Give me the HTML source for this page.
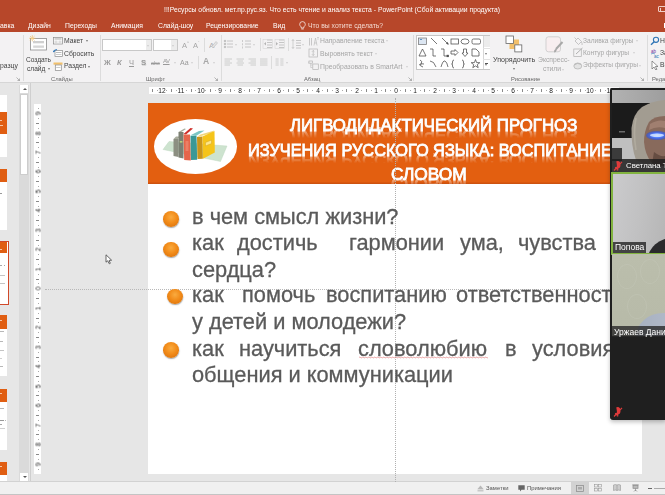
<!DOCTYPE html>
<html><head><meta charset="utf-8">
<style>
*{margin:0;padding:0;box-sizing:border-box}
html,body{width:665px;height:495px;overflow:hidden;background:#e5e5e5;font-family:"Liberation Sans",sans-serif}
.a{position:absolute}
.t{position:absolute;white-space:nowrap;line-height:1;will-change:transform}
#title{left:0;top:0;width:665px;height:32px;background:#b7472a}
.wt{color:#fff;font-size:6.8px}
.wt2{color:#f3d9d0;font-size:6.8px}
#ribbon{left:0;top:32px;width:665px;height:51px;background:#f3f2f3;border-bottom:1px solid #d6d6d6}
.rt{color:#444;font-size:6.8px}
.gl{color:#666;font-size:6.8px}
.dis{color:#a6a6a6;font-size:6.8px}
.sep{position:absolute;width:1px;background:#dcdcdc}
#work{left:0;top:83px;width:665px;height:399px;background:#e6e6e6}
#status{left:0;top:481px;width:665px;height:14px;background:#f0f0f0;border-top:1px solid #d2d2d2;border-bottom:1.2px solid #c4c4c4}
.thumb{position:absolute;left:0;width:7.3px;background:#fff}
.thumb .h{position:absolute;left:0;width:7.3px;background:#e05e12}
#slide{left:148px;top:103px;width:494px;height:371px;background:#fff}
.body{color:#5a5a5a;font-size:21.8px;-webkit-text-stroke:0.3px #5a5a5a}
.title{transform-origin:0 0;color:#fff;font-size:16.3px;font-weight:normal;-webkit-text-stroke:0.8px #fff;text-shadow:0 0 1px rgba(120,60,20,.5);-webkit-box-reflect:below -6px linear-gradient(transparent 30%,rgba(255,255,255,.7))}
.bul{position:absolute;width:16px;height:15.7px;border-radius:50%;background:radial-gradient(circle at 50% 38%,#f9ab40 0,#f28c1a 45%,#e27a10 75%,#a85208 100%);box-shadow:0.3px 1px 1.2px rgba(0,0,0,.35)}
.rn{position:absolute;width:10px;text-align:center;font-size:6.6px;line-height:7px;color:#222;will-change:transform}
.rv{transform:rotate(-90deg)}
.arr{position:absolute;width:0;height:0;border-left:1.8px solid transparent;border-right:1.8px solid transparent;border-top:2px solid #777}
.arr.g{border-top-color:#bdbdbd;transform:scale(.85)}
.gl{font-size:5.8px}
</style></head><body>
<div id="title" class="a"></div>
<div class="t wt" style="left:164px;top:7px">!!!Ресурсы обновл. мет.пр.рус.яз. Что есть чтение и анализ текста - PowerPoint (Сбой активации продукта)</div>
<div class="t wt" style="left:0;top:23px">авка</div>
<div class="t wt" style="left:28px;top:23px">Дизайн</div>
<div class="t wt" style="left:65px;top:23px">Переходы</div>
<div class="t wt" style="left:111px;top:23px">Анимация</div>
<div class="t wt" style="left:157.6px;top:23px">Слайд-шоу</div>
<div class="t wt" style="left:205.6px;top:23px">Рецензирование</div>
<div class="t wt" style="left:273px;top:23px">Вид</div>
<div class="t wt2" style="left:307.7px;top:23px">Что вы хотите сделать?</div>

<div id="ribbon" class="a"></div>
<div id="work" class="a"></div>
<!-- ribbon content -->
<div class="t rt" style="left:0;top:63.3px">разцу</div>
<svg class="a" style="left:16px;top:77px" width="4" height="4"><path d="M0.5,0.5 L3.5,3.5 M3.5,1.5 V3.5 H1.5" stroke="#888" stroke-width="0.6" fill="none"/></svg>
<div class="sep" style="left:22.5px;top:35px;height:46px"></div>
<!-- Создать слайд -->
<svg class="a" style="left:28px;top:34px" width="20" height="18" viewBox="0 0 20 18"><rect x="2.5" y="4.5" width="16" height="11.5" fill="#fff" stroke="#8c8c8c" stroke-width="0.8"/><rect x="5" y="7" width="11" height="2.3" fill="#cfcfcf"/><rect x="6" y="11.5" width="10" height="2.3" fill="#d6d6d6"/><rect x="5" y="11.5" width="0.5" height="2.3" fill="#bbb"/><circle cx="4.3" cy="4.3" r="1.3" fill="#f4d08a"/><path d="M4.3,1.2V3M4.3,5.6V7.4M1.2,4.3H3M5.6,4.3H7.4M2.1,2.1L3.2,3.2M5.4,5.4L6.5,6.5M2.1,6.5L3.2,5.4M5.4,3.2L6.5,2.1" stroke="#efbf6a" stroke-width="0.7"/></svg>
<div class="t rt" style="left:25.5px;top:56.8px;font-size:6.6px">Создать</div>
<div class="t rt" style="left:27px;top:66.0px;font-size:6.6px">слайд</div>
<div class="arr" style="left:47.5px;top:68px"></div>
<svg class="a" style="left:53px;top:37px" width="10" height="7.5" viewBox="0 0 10 7.5"><rect x="0.5" y="0.5" width="9" height="6.5" fill="#fff" stroke="#8a8a8a" stroke-width="0.7"/><rect x="1.5" y="1.3" width="7" height="1.3" fill="#bbb"/><rect x="1.5" y="3.5" width="3" height="2.5" fill="#ddd"/><rect x="5.5" y="3.5" width="3" height="2.5" fill="#ddd"/></svg>
<div class="t rt" style="left:63.5px;top:38.1px">Макет</div>
<div class="arr" style="left:85.5px;top:40px"></div>
<svg class="a" style="left:53px;top:49px" width="10" height="8" viewBox="0 0 10 8"><rect x="2" y="1.5" width="7.5" height="6" fill="#fff" stroke="#8a8a8a" stroke-width="0.7"/><rect x="3" y="3" width="5.5" height="1" fill="#bbb"/><rect x="3" y="5" width="5.5" height="1" fill="#ccc"/><path d="M0.5,3 Q1,0.3 4,0.8" stroke="#2e75b6" stroke-width="1.1" fill="none"/><path d="M0,1.8 L0.8,3.6 L2,2.2Z" fill="#2e75b6"/></svg>
<div class="t rt" style="left:63.5px;top:50.6px">Сбросить</div>
<svg class="a" style="left:53px;top:61.5px" width="10" height="9" viewBox="0 0 10 9"><rect x="0.5" y="0.5" width="9" height="2.2" fill="#f2c06b"/><rect x="2.3" y="3" width="6" height="5.5" fill="#fff" stroke="#8a8a8a" stroke-width="0.7"/><rect x="3.2" y="5" width="4.2" height="1" fill="#ccc"/></svg>
<div class="t rt" style="left:63.5px;top:63.4px">Раздел</div>
<div class="arr" style="left:87.7px;top:65.5px"></div>
<div class="t gl" style="left:51px;top:77.0px">Слайды</div>
<div class="sep" style="left:99.5px;top:35px;height:46px"></div>
<!-- Шрифт -->
<div class="a" style="left:101.9px;top:39px;width:50px;height:12.3px;background:#fff;border:1px solid #c8c8c8"></div>
<div class="a" style="left:145.5px;top:40px;width:5.5px;height:10.3px;background:#ececec"></div>
<div class="arr g" style="left:146.6px;top:44.5px"></div>
<div class="a" style="left:152.8px;top:39px;width:25px;height:12.3px;background:#fff;border:1px solid #c8c8c8"></div>
<div class="a" style="left:171.3px;top:40px;width:5.5px;height:10.3px;background:#ececec"></div>
<div class="arr g" style="left:172.4px;top:44.5px"></div>
<div class="t dis" style="left:181.5px;top:42.3px;font-size:7.5px">A</div><div class="t dis" style="left:186.6px;top:40.8px;font-size:4px">^</div>
<div class="t dis" style="left:192.7px;top:42.3px;font-size:7.5px">A</div><div class="t dis" style="left:197.8px;top:41.1px;font-size:4px">ˇ</div>
<div class="sep" style="left:204.2px;top:38px;height:14px"></div>
<svg class="a" style="left:208.5px;top:39.5px" width="9" height="9" viewBox="0 0 9 9"><text x="0" y="7.5" font-family="Liberation Sans" font-size="8" fill="#b0b0b0">A</text><path d="M4,8 L8.5,3 L7,1.5 L2.8,6.5Z" fill="#e4e4e4" stroke="#b0b0b0" stroke-width="0.5"/></svg>
<div class="t dis" style="color:#999;left:104px;top:59.3px;font-size:7.5px;font-weight:bold">Ж</div>
<div class="t dis" style="color:#999;left:116.5px;top:59.3px;font-size:7.5px;font-style:italic;font-weight:bold">К</div>
<div class="t dis" style="color:#999;left:128.5px;top:59.3px;font-size:7.5px;text-decoration:underline">Ч</div>
<div class="t dis" style="color:#999;left:141.3px;top:59.3px;font-size:7.8px;font-weight:bold;text-shadow:0.6px 0.6px 0 #d8d8d8">S</div>
<div class="t dis" style="color:#999;left:150.6px;top:60.6px;font-size:5.5px;text-decoration:line-through">abc</div>
<div class="t dis" style="color:#999;left:162.7px;top:58.3px;font-size:6px;letter-spacing:-0.5px;text-decoration:underline">AV</div>
<div class="arr g" style="left:174px;top:61.5px"></div>
<div class="t dis" style="color:#999;left:180.2px;top:59.3px;font-size:7px">Aa</div>
<div class="arr g" style="left:191px;top:61.5px"></div>
<div class="sep" style="left:198.2px;top:56px;height:13px"></div>
<div class="t dis" style="left:203px;top:56.8px;font-size:8.6px;font-weight:bold;color:#a8a8a8">A</div>
<div class="arr g" style="left:213px;top:61.5px"></div>
<div class="t gl" style="left:145.5px;top:76.8px">Шрифт</div>
<svg class="a" style="left:214px;top:77px" width="4" height="4"><path d="M0.5,0.5 L3.5,3.5 M3.5,1.5 V3.5 H1.5" stroke="#888" stroke-width="0.6" fill="none"/></svg>
<div class="sep" style="left:220.5px;top:35px;height:46px"></div>
<!-- Абзац -->
<svg class="a" style="left:223px;top:39px" width="84" height="28" viewBox="0 0 84 28" fill="none" stroke="#bababa" stroke-width="0.8">
 <g><circle cx="2" cy="2" r="0.8" fill="#b4b4b4"/><circle cx="2" cy="5" r="0.8" fill="#b4b4b4"/><circle cx="2" cy="8" r="0.8" fill="#b4b4b4"/><path d="M4,2H10M4,5H10M4,8H10"/></g>
 <g transform="translate(18,0)"><path d="M1.5,1V3M1.5,4.3V6.3M1.5,7.5V9.5" stroke-width="0.7"/><path d="M4,2H10M4,5H10M4,8H10"/></g>
 <g transform="translate(40,0)"><path d="M4,1H9M4,3.5H9M4,6H9M4,8.5H9" /><path d="M3,3 L1,4.8 L3,6.5Z" fill="#b4b4b4" stroke="none"/><rect x="0" y="0.5" width="9.5" height="9" stroke="#d0d0d0" stroke-width="0.5"/></g>
 <g transform="translate(52,0)"><path d="M4,1H9M4,3.5H9M4,6H9M4,8.5H9" /><path d="M1,3 L3,4.8 L1,6.5Z" fill="#b4b4b4" stroke="none"/><rect x="0" y="0.5" width="9.5" height="9" stroke="#d0d0d0" stroke-width="0.5"/></g>
 <g transform="translate(68,0)"><path d="M5,1.5H10M5,4H10M5,6.5H10M5,9H10"/><path d="M2,0.5V9.5M0.8,2L2,0.5L3.2,2M0.8,8L2,9.5L3.2,8" stroke-width="0.6"/></g>
 <g transform="translate(1.5,19.5)" stroke="#c0c0c0" stroke-width="0.75"><path d="M0,0.5H7.5M0,2.5H5.5M0,4.5H7.5M0,6.5H5.5"/></g>
 <g transform="translate(13.5,19.5)" stroke="#c0c0c0" stroke-width="0.75"><path d="M0,0.5H7.5M1,2.5H6.5M0,4.5H7.5M1,6.5H6.5"/></g>
 <g transform="translate(25.5,19.5)" stroke="#c0c0c0" stroke-width="0.75"><path d="M0,0.5H7.5M2,2.5H7.5M0,4.5H7.5M2,6.5H7.5"/></g>
 <g transform="translate(37,19.5)" stroke="#c0c0c0" stroke-width="0.75"><path d="M0,0.5H7.5M0,2.5H7.5M0,4.5H7.5M0,6.5H7.5"/></g>
 <g transform="translate(52.5,19.5)" stroke="#c0c0c0" stroke-width="0.75"><path d="M0,0.5H3.2M0,2.5H3.2M0,4.5H3.2M0,6.5H3.2M4.8,0.5H8M4.8,2.5H8M4.8,4.5H8M4.8,6.5H8"/></g>
</svg>
<div class="arr g" style="left:235.3px;top:43.5px"></div>
<div class="arr g" style="left:253px;top:43.5px"></div>
<div class="sep" style="left:259.6px;top:38px;height:13px"></div>
<div class="sep" style="left:287.6px;top:38px;height:13px"></div>
<div class="arr g" style="left:302px;top:43.5px"></div>
<div class="sep" style="left:271.4px;top:56px;height:13px"></div>
<div class="arr g" style="left:286.2px;top:61.5px"></div>
<svg class="a" style="left:308px;top:36px" width="11" height="35" viewBox="0 0 11 35" fill="none" stroke="#b4b4b4" stroke-width="0.7">
 <path d="M1.5,9.5V2M3.5,9.5V2"/><path d="M6,9.5 L7.5,2 L9,9.5M6.5,7H8.5" stroke-width="0.6"/><path d="M10,4V1M9.3,1.8L10,1L10.7,1.8" stroke-width="0.5"/>
 <rect x="1" y="13" width="8.5" height="8"/><path d="M5.2,14.5V19.5M4,15.7L5.2,14.5L6.4,15.7M4,18.3L5.2,19.5L6.4,18.3"/>
 <rect x="1" y="25" width="3.5" height="2.2"/><path d="M2.7,27.2V31.5H4.5M2.7,29H4.5" stroke-width="0.5"/><rect x="4.8" y="28" width="5.5" height="5.5"/><path d="M0,26H1M0,27H1" stroke-width="0.4"/>
</svg>
<div class="t dis" style="left:319.5px;top:38.1px">Направление текста</div><div class="arr g" style="left:385.8px;top:40px"></div>
<div class="t dis" style="left:319.5px;top:50.8px">Выровнять текст</div><div class="arr g" style="left:374.5px;top:52.7px"></div>
<div class="t dis" style="left:319.5px;top:63.8px">Преобразовать в SmartArt</div><div class="arr g" style="left:405.5px;top:65.5px"></div>
<div class="t gl" style="left:303.9px;top:76.8px">Абзац</div>
<svg class="a" style="left:407.5px;top:77px" width="4" height="4"><path d="M0.5,0.5 L3.5,3.5 M3.5,1.5 V3.5 H1.5" stroke="#888" stroke-width="0.6" fill="none"/></svg>
<div class="sep" style="left:413.4px;top:35px;height:46px"></div>
<!-- Рисование: shapes gallery -->
<div class="a" style="left:416.3px;top:35.4px;width:74px;height:34.6px;background:#fff;border:1px solid #c6c6c6"></div>
<div class="a" style="left:483px;top:36.4px;width:6.5px;height:32.6px;background:#fff;border-left:1px solid #d6d6d6"></div>
<div class="a" style="left:483.5px;top:36.4px;width:6px;height:11px;background:#ececec"></div>
<div class="a" style="left:483px;top:47.6px;width:7px;height:1px;background:#e2e2e2"></div>
<div class="a" style="left:483px;top:58.5px;width:7px;height:1px;background:#e2e2e2"></div>
<div class="arr" style="left:485.3px;top:52.5px"></div>
<div class="arr" style="left:485.3px;top:64px"></div><div class="a" style="left:485.3px;top:62.5px;width:3px;height:0.6px;background:#555"></div>
<svg class="a" style="left:417px;top:36px" width="66" height="34" viewBox="0 0 66 34" fill="none" stroke="#4a4a4a" stroke-width="0.75">
 <rect x="1.5" y="2" width="8" height="6.5" stroke="#777" fill="#dce6f2"/><path d="M3,3.5H5" stroke="#2e75b6"/>
 <path d="M14,2L20,8"/>
 <path d="M25,2L31,8"/><path d="M30.5,6.5L31.3,8.3L29.5,7.5Z" fill="#555"/>
 <rect x="34" y="3" width="7.5" height="5"/>
 <ellipse cx="48" cy="5.5" rx="4" ry="2.6"/>
 <rect x="55" y="3" width="8.5" height="5" rx="1.5"/>
 <path d="M2,20L5.5,13L9,20Z"/>
 <path d="M13,13H16V20H19"/>
 <path d="M24,13H27V20H30"/><rect x="30" y="19.2" width="1.5" height="1.5" fill="#555"/>
 <path d="M34,15H38V13.5L41,16.5L38,19.5V18H34Z"/>
 <path d="M46.5,13H49.5V17H51L48,20.5L45,17H46.5Z"/>
 <path d="M55,13H59L62,16V20H55Z"/>
 <path d="M3,24Q6,25 4,28Q2,30 6,31M2,29Q4,27 7,28"/>
 <path d="M13,25Q17,25 19,31"/>
 <path d="M24,31Q26,24 28,25Q30,26 31,31"/>
 <path d="M37,24Q35.5,24 35.5,26V27.5L34.5,28L35.5,28.5V30Q35.5,32 37,32"/>
 <path d="M45,24Q46.5,24 46.5,26V27.5L47.5,28L46.5,28.5V30Q46.5,32 45,32"/>
 <path d="M58.5,23.5L59.6,26.6L62.8,26.7L60.3,28.6L61.2,31.7L58.5,29.9L55.8,31.7L56.7,28.6L54.2,26.7L57.4,26.6Z"/>
</svg>
<!-- Упорядочить -->
<svg class="a" style="left:505px;top:35px" width="18" height="18" viewBox="0 0 18 18"><rect x="4.5" y="4.5" width="9.5" height="9.5" fill="#f2c06b"/><rect x="1" y="1" width="7.5" height="7.5" fill="#fff" stroke="#666" stroke-width="0.8"/><rect x="9.8" y="9.9" width="7" height="7" fill="#fff" stroke="#666" stroke-width="0.8"/></svg>
<div class="t rt" style="left:493.1px;top:56.6px;font-size:7.1px">Упорядочить</div>
<div class="arr" style="left:512.5px;top:67.5px"></div>
<!-- Экспресс-стили -->
<svg class="a" style="left:545px;top:36px" width="19" height="18" viewBox="0 0 19 18"><rect x="1" y="0.8" width="14.5" height="15" rx="2.5" fill="#f8eef0" stroke="#c8c8c8" stroke-width="0.8"/><path d="M17.5,6 L11,13" stroke="#a8a8a8" stroke-width="2"/><path d="M11,12.5 Q8.5,14 9,16.5 Q11.5,16 12,13.5Z" fill="#a8a8a8"/></svg>
<div class="t dis" style="left:537.8px;top:56.8px">Экспресс-</div>
<div class="t dis" style="left:542.5px;top:66.3px">стили</div>
<div class="arr g" style="left:562px;top:68.5px"></div>
<div class="t gl" style="left:511px;top:77.4px">Рисование</div>
<!-- shape fill/outline/effects -->
<svg class="a" style="left:572.5px;top:36px" width="10" height="34" viewBox="0 0 10 34" fill="none" stroke="#b0b0b0" stroke-width="0.7">
 <path d="M2,5 L5,2 L8.5,5.5 L5.5,8.5Z"/><path d="M8.5,6 Q9.5,8 9,9"/><path d="M3,3 L1.5,1.5"/>
 <rect x="0.8" y="13" width="7.5" height="7.5"/><path d="M3,18 L9.5,12" stroke-width="1"/>
 <ellipse cx="4.8" cy="30" rx="4" ry="3" fill="#e4e4e4"/><path d="M1.5,29 Q4,26 8,28.5"/>
</svg>
<div class="t dis" style="left:582.9px;top:37.8px;font-size:6.6px">Заливка фигуры</div><div class="arr g" style="left:636px;top:40.3px"></div>
<div class="t dis" style="left:582.9px;top:49.8px;font-size:6.6px">Контур фигуры</div><div class="arr g" style="left:632.5px;top:52.3px"></div>
<div class="t dis" style="left:582.9px;top:62.3px;font-size:6.6px">Эффекты фигуры</div><div class="arr g" style="left:639px;top:65px"></div>
<svg class="a" style="left:640.3px;top:77px" width="4" height="4"><path d="M0.5,0.5 L3.5,3.5 M3.5,1.5 V3.5 H1.5" stroke="#888" stroke-width="0.6" fill="none"/></svg>
<div class="sep" style="left:647px;top:35px;height:46px"></div>
<!-- Редактирование -->
<svg class="a" style="left:650px;top:36px" width="10" height="34" viewBox="0 0 10 34" fill="none">
 <circle cx="6" cy="3.8" r="2.6" stroke="#2e75b6" stroke-width="1.1"/><path d="M4.2,5.8 L1,8.8" stroke="#2e75b6" stroke-width="1.4"/>
 <text x="1" y="17" font-family="Liberation Sans" font-size="4.5" fill="#7030a0">ab</text><path d="M1,18 Q3,16.5 5,18" stroke="#2e75b6" stroke-width="0.6"/><text x="4" y="21.5" font-family="Liberation Sans" font-size="4.5" fill="#2e75b6">ac</text>
 <path d="M2,25 V33 L4,31 L5.8,34 L7,33.3 L5.3,30.5 L8,30.5Z" stroke="#555" stroke-width="0.6" fill="#fff"/>
</svg>
<div class="t rt" style="left:659.6px;top:37.8px">Найти</div>
<div class="t rt" style="left:659.6px;top:49.8px">Заменить</div>
<div class="t rt" style="left:659.6px;top:62.3px">Выделить</div>
<div class="t gl" style="left:651.5px;top:77.2px">Редактирование</div>
<!-- title bar icons -->
<div class="a" style="left:658.3px;top:5.8px;width:8px;height:6.5px;border:1px solid #f0d0c8;border-radius:1px"></div>
<div class="a" style="left:660px;top:7.5px;width:1px;height:3px;background:#f0d0c8"></div>
<div class="a" style="left:663.8px;top:23px;width:2px;height:4.5px;background:#fff"></div>
<svg class="a" style="left:298.5px;top:21px" width="7" height="9" viewBox="0 0 7 9"><path d="M3.5,0.6 Q6.3,0.6 6.3,3.3 Q6.3,4.8 4.8,5.9 V7 H2.2 V5.9 Q0.7,4.8 0.7,3.3 Q0.7,0.6 3.5,0.6Z" fill="none" stroke="#fff" stroke-width="0.7"/><path d="M2.3,8H4.7" stroke="#fff" stroke-width="0.7"/></svg>

<div id="status" class="a"></div>


<!-- left panel -->
<div class="a" style="left:19px;top:85px;width:10px;height:396px;background:#dadada"></div>
<div class="a" style="left:19.5px;top:85px;width:8.3px;height:8px;background:#fff"></div>
<div class="a" style="left:21.2px;top:88px;width:0;height:0;border-left:2px solid transparent;border-right:2px solid transparent;border-bottom:2.2px solid #555;margin-left:1.5px"></div>
<div class="a" style="left:19.5px;top:93.5px;width:8.3px;height:81.3px;background:#fff;border:1px solid #cdcdcd"></div>
<div class="a" style="left:19.5px;top:472.8px;width:8.3px;height:8px;background:#fff"></div>
<div class="a" style="left:21.2px;top:476px;width:0;height:0;border-left:2px solid transparent;border-right:2px solid transparent;border-top:2.2px solid #555;margin-left:1.5px"></div>
<div class="a" style="left:29.5px;top:83px;width:1px;height:398px;background:#cfcfcf"></div>

<div class="thumb" style="top:95.3px;height:61.3px"><div class="h" style="top:17.1px;height:21.2px"></div></div>
<div class="thumb" style="top:169px;height:60.5px"><div class="h" style="top:0;height:12.5px"></div></div>
<div class="a" style="left:0;top:240.8px;width:9.4px;height:64.7px;border:1.6px solid #d0492a;border-left:none;background:#fff"><div class="a" style="left:0;top:0.6px;width:7.2px;height:10.6px;background:#e05e12"></div></div>
<div class="thumb" style="top:315px;height:61px"><div class="h" style="top:0;height:13.5px"></div></div>
<div class="thumb" style="top:389px;height:60.5px"><div class="h" style="top:0;height:12.5px"></div></div>
<div class="thumb" style="top:462px;height:19px"><div class="h" style="top:0;height:12.5px"></div></div>


<!-- thumb marks -->
<div class="a" style="left:0;top:120px;width:2px;height:1px;background:#f6c8a8"></div>
<div class="a" style="left:0;top:125px;width:3px;height:1px;background:#f6c8a8"></div>
<div class="a" style="left:0;top:193px;width:2px;height:1px;background:#999"></div>
<div class="a" style="left:0;top:249px;width:2px;height:1px;background:#f6c8a8"></div>
<div class="a" style="left:0;top:265px;width:2px;height:1px;background:#a8a8a8"></div><div class="a" style="left:4px;top:265px;width:1px;height:1px;background:#a8a8a8"></div>
<div class="a" style="left:0;top:274.5px;width:5px;height:1px;background:#c4c4c4"></div>
<div class="a" style="left:0;top:283px;width:5px;height:1px;background:#c4c4c4"></div>
<div class="a" style="left:0;top:320px;width:2px;height:1px;background:#f6c8a8"></div>
<div class="a" style="left:0;top:331px;width:4px;height:1px;background:#b8b8b8"></div>
<div class="a" style="left:0;top:341px;width:3px;height:1px;background:#b8b8b8"></div>
<div class="a" style="left:0;top:350px;width:4px;height:1px;background:#c4c4c4"></div>
<div class="a" style="left:0;top:358px;width:2px;height:1px;background:#d0d0d0"></div>
<div class="a" style="left:0;top:366px;width:3px;height:1px;background:#b8b8b8"></div>
<div class="a" style="left:0;top:393px;width:2px;height:1px;background:#f6c8a8"></div>
<div class="a" style="left:0;top:408px;width:4px;height:1px;background:#b8b8b8"></div>
<div class="a" style="left:0;top:420px;width:4px;height:1px;background:#999"></div><div class="a" style="left:5px;top:420px;width:1px;height:1px;background:#b8b8b8"></div>
<div class="a" style="left:0;top:423.5px;width:2px;height:1px;background:#a8a8a8"></div>
<div class="a" style="left:0;top:428px;width:5px;height:1px;background:#d0d0d0"></div>
<div class="a" style="left:0;top:466px;width:2px;height:1px;background:#f6c8a8"></div>
<!-- vertical ruler -->
<div class="a" style="left:34px;top:103.5px;width:7px;height:370px;background:#fff"></div>
<svg class="a" style="left:105px;top:254px" width="8" height="11" viewBox="0 0 8 11"><path d="M1,0.8 L1,8.2 L2.7,6.8 L4.3,9.8 L5.3,9.3 L4.1,6.4 L6.6,6.2Z" fill="#fff" stroke="#555" stroke-width="0.9" stroke-linejoin="round"/></svg>
<!-- horizontal ruler -->
<div class="a" style="left:148.7px;top:87px;width:470px;height:7px;background:#fff"></div>
<div class="a" style="left:151.6px;top:89px;width:1px;height:2.5px;background:#8a8a8a"></div>
<div class="a" style="left:156.5px;top:90px;width:1px;height:1px;background:#aaa"></div>
<div class="rn" style="left:156.8px;top:87.2px">12</div>
<div class="a" style="left:166.2px;top:90px;width:1px;height:1px;background:#aaa"></div>
<div class="a" style="left:171.1px;top:89px;width:1px;height:2.5px;background:#8a8a8a"></div>
<div class="a" style="left:176.0px;top:90px;width:1px;height:1px;background:#aaa"></div>
<div class="rn" style="left:176.3px;top:87.2px">11</div>
<div class="a" style="left:185.7px;top:90px;width:1px;height:1px;background:#aaa"></div>
<div class="a" style="left:190.6px;top:89px;width:1px;height:2.5px;background:#8a8a8a"></div>
<div class="a" style="left:195.4px;top:90px;width:1px;height:1px;background:#aaa"></div>
<div class="rn" style="left:195.8px;top:87.2px">10</div>
<div class="a" style="left:205.2px;top:90px;width:1px;height:1px;background:#aaa"></div>
<div class="a" style="left:210.0px;top:89px;width:1px;height:2.5px;background:#8a8a8a"></div>
<div class="a" style="left:214.9px;top:90px;width:1px;height:1px;background:#aaa"></div>
<div class="rn" style="left:215.3px;top:87.2px">9</div>
<div class="a" style="left:224.7px;top:90px;width:1px;height:1px;background:#aaa"></div>
<div class="a" style="left:229.5px;top:89px;width:1px;height:2.5px;background:#8a8a8a"></div>
<div class="a" style="left:234.4px;top:90px;width:1px;height:1px;background:#aaa"></div>
<div class="rn" style="left:234.8px;top:87.2px">8</div>
<div class="a" style="left:244.1px;top:90px;width:1px;height:1px;background:#aaa"></div>
<div class="a" style="left:249.0px;top:89px;width:1px;height:2.5px;background:#8a8a8a"></div>
<div class="a" style="left:253.9px;top:90px;width:1px;height:1px;background:#aaa"></div>
<div class="rn" style="left:254.2px;top:87.2px">7</div>
<div class="a" style="left:263.6px;top:90px;width:1px;height:1px;background:#aaa"></div>
<div class="a" style="left:268.5px;top:89px;width:1px;height:2.5px;background:#8a8a8a"></div>
<div class="a" style="left:273.4px;top:90px;width:1px;height:1px;background:#aaa"></div>
<div class="rn" style="left:273.7px;top:87.2px">6</div>
<div class="a" style="left:283.1px;top:90px;width:1px;height:1px;background:#aaa"></div>
<div class="a" style="left:288.0px;top:89px;width:1px;height:2.5px;background:#8a8a8a"></div>
<div class="a" style="left:292.8px;top:90px;width:1px;height:1px;background:#aaa"></div>
<div class="rn" style="left:293.2px;top:87.2px">5</div>
<div class="a" style="left:302.6px;top:90px;width:1px;height:1px;background:#aaa"></div>
<div class="a" style="left:307.4px;top:89px;width:1px;height:2.5px;background:#8a8a8a"></div>
<div class="a" style="left:312.3px;top:90px;width:1px;height:1px;background:#aaa"></div>
<div class="rn" style="left:312.7px;top:87.2px">4</div>
<div class="a" style="left:322.1px;top:90px;width:1px;height:1px;background:#aaa"></div>
<div class="a" style="left:326.9px;top:89px;width:1px;height:2.5px;background:#8a8a8a"></div>
<div class="a" style="left:331.8px;top:90px;width:1px;height:1px;background:#aaa"></div>
<div class="rn" style="left:332.2px;top:87.2px">3</div>
<div class="a" style="left:341.5px;top:90px;width:1px;height:1px;background:#aaa"></div>
<div class="a" style="left:346.4px;top:89px;width:1px;height:2.5px;background:#8a8a8a"></div>
<div class="a" style="left:351.3px;top:90px;width:1px;height:1px;background:#aaa"></div>
<div class="rn" style="left:351.6px;top:87.2px">2</div>
<div class="a" style="left:361.0px;top:90px;width:1px;height:1px;background:#aaa"></div>
<div class="a" style="left:365.9px;top:89px;width:1px;height:2.5px;background:#8a8a8a"></div>
<div class="a" style="left:370.8px;top:90px;width:1px;height:1px;background:#aaa"></div>
<div class="rn" style="left:371.1px;top:87.2px">1</div>
<div class="a" style="left:380.5px;top:90px;width:1px;height:1px;background:#aaa"></div>
<div class="a" style="left:385.4px;top:89px;width:1px;height:2.5px;background:#8a8a8a"></div>
<div class="a" style="left:390.2px;top:90px;width:1px;height:1px;background:#aaa"></div>
<div class="rn" style="left:390.6px;top:87.2px">0</div>
<div class="a" style="left:400.0px;top:90px;width:1px;height:1px;background:#aaa"></div>
<div class="a" style="left:404.8px;top:89px;width:1px;height:2.5px;background:#8a8a8a"></div>
<div class="a" style="left:409.7px;top:90px;width:1px;height:1px;background:#aaa"></div>
<div class="rn" style="left:410.1px;top:87.2px">1</div>
<div class="a" style="left:419.5px;top:90px;width:1px;height:1px;background:#aaa"></div>
<div class="a" style="left:424.3px;top:89px;width:1px;height:2.5px;background:#8a8a8a"></div>
<div class="a" style="left:429.2px;top:90px;width:1px;height:1px;background:#aaa"></div>
<div class="rn" style="left:429.6px;top:87.2px">2</div>
<div class="a" style="left:438.9px;top:90px;width:1px;height:1px;background:#aaa"></div>
<div class="a" style="left:443.8px;top:89px;width:1px;height:2.5px;background:#8a8a8a"></div>
<div class="a" style="left:448.7px;top:90px;width:1px;height:1px;background:#aaa"></div>
<div class="rn" style="left:449.0px;top:87.2px">3</div>
<div class="a" style="left:458.4px;top:90px;width:1px;height:1px;background:#aaa"></div>
<div class="a" style="left:463.3px;top:89px;width:1px;height:2.5px;background:#8a8a8a"></div>
<div class="a" style="left:468.2px;top:90px;width:1px;height:1px;background:#aaa"></div>
<div class="rn" style="left:468.5px;top:87.2px">4</div>
<div class="a" style="left:477.9px;top:90px;width:1px;height:1px;background:#aaa"></div>
<div class="a" style="left:482.8px;top:89px;width:1px;height:2.5px;background:#8a8a8a"></div>
<div class="a" style="left:487.6px;top:90px;width:1px;height:1px;background:#aaa"></div>
<div class="rn" style="left:488.0px;top:87.2px">5</div>
<div class="a" style="left:497.4px;top:90px;width:1px;height:1px;background:#aaa"></div>
<div class="a" style="left:502.2px;top:89px;width:1px;height:2.5px;background:#8a8a8a"></div>
<div class="a" style="left:507.1px;top:90px;width:1px;height:1px;background:#aaa"></div>
<div class="rn" style="left:507.5px;top:87.2px">6</div>
<div class="a" style="left:516.9px;top:90px;width:1px;height:1px;background:#aaa"></div>
<div class="a" style="left:521.7px;top:89px;width:1px;height:2.5px;background:#8a8a8a"></div>
<div class="a" style="left:526.6px;top:90px;width:1px;height:1px;background:#aaa"></div>
<div class="rn" style="left:527.0px;top:87.2px">7</div>
<div class="a" style="left:536.3px;top:90px;width:1px;height:1px;background:#aaa"></div>
<div class="a" style="left:541.2px;top:89px;width:1px;height:2.5px;background:#8a8a8a"></div>
<div class="a" style="left:546.1px;top:90px;width:1px;height:1px;background:#aaa"></div>
<div class="rn" style="left:546.4px;top:87.2px">8</div>
<div class="a" style="left:555.8px;top:90px;width:1px;height:1px;background:#aaa"></div>
<div class="a" style="left:560.7px;top:89px;width:1px;height:2.5px;background:#8a8a8a"></div>
<div class="a" style="left:565.6px;top:90px;width:1px;height:1px;background:#aaa"></div>
<div class="rn" style="left:565.9px;top:87.2px">9</div>
<div class="a" style="left:575.3px;top:90px;width:1px;height:1px;background:#aaa"></div>
<div class="a" style="left:580.2px;top:89px;width:1px;height:2.5px;background:#8a8a8a"></div>
<div class="a" style="left:585.0px;top:90px;width:1px;height:1px;background:#aaa"></div>
<div class="rn" style="left:585.4px;top:87.2px">10</div>
<div class="a" style="left:594.8px;top:90px;width:1px;height:1px;background:#aaa"></div>
<div class="a" style="left:599.6px;top:89px;width:1px;height:2.5px;background:#8a8a8a"></div>
<div class="a" style="left:604.5px;top:90px;width:1px;height:1px;background:#aaa"></div>
<div class="rn" style="left:604.9px;top:87.2px">11</div>
<div class="a" style="left:37.5px;top:108.1px;width:1px;height:1px;background:#aaa"></div>
<div class="rn rv" style="left:32.5px;top:110.0px">9</div>
<div class="a" style="left:37.5px;top:117.8px;width:1px;height:1px;background:#aaa"></div>
<div class="a" style="left:36.3px;top:122.7px;width:2.5px;height:1px;background:#8a8a8a"></div>
<div class="a" style="left:37.5px;top:127.6px;width:1px;height:1px;background:#aaa"></div>
<div class="rn rv" style="left:32.5px;top:129.5px">8</div>
<div class="a" style="left:37.5px;top:137.3px;width:1px;height:1px;background:#aaa"></div>
<div class="a" style="left:36.3px;top:142.2px;width:2.5px;height:1px;background:#8a8a8a"></div>
<div class="a" style="left:37.5px;top:147.1px;width:1px;height:1px;background:#aaa"></div>
<div class="rn rv" style="left:32.5px;top:148.9px">7</div>
<div class="a" style="left:37.5px;top:156.8px;width:1px;height:1px;background:#aaa"></div>
<div class="a" style="left:36.3px;top:161.7px;width:2.5px;height:1px;background:#8a8a8a"></div>
<div class="a" style="left:37.5px;top:166.6px;width:1px;height:1px;background:#aaa"></div>
<div class="rn rv" style="left:32.5px;top:168.4px">6</div>
<div class="a" style="left:37.5px;top:176.3px;width:1px;height:1px;background:#aaa"></div>
<div class="a" style="left:36.3px;top:181.2px;width:2.5px;height:1px;background:#8a8a8a"></div>
<div class="a" style="left:37.5px;top:186.0px;width:1px;height:1px;background:#aaa"></div>
<div class="rn rv" style="left:32.5px;top:187.9px">5</div>
<div class="a" style="left:37.5px;top:195.8px;width:1px;height:1px;background:#aaa"></div>
<div class="a" style="left:36.3px;top:200.6px;width:2.5px;height:1px;background:#8a8a8a"></div>
<div class="a" style="left:37.5px;top:205.5px;width:1px;height:1px;background:#aaa"></div>
<div class="rn rv" style="left:32.5px;top:207.4px">4</div>
<div class="a" style="left:37.5px;top:215.2px;width:1px;height:1px;background:#aaa"></div>
<div class="a" style="left:36.3px;top:220.1px;width:2.5px;height:1px;background:#8a8a8a"></div>
<div class="a" style="left:37.5px;top:225.0px;width:1px;height:1px;background:#aaa"></div>
<div class="rn rv" style="left:32.5px;top:226.9px">3</div>
<div class="a" style="left:37.5px;top:234.7px;width:1px;height:1px;background:#aaa"></div>
<div class="a" style="left:36.3px;top:239.6px;width:2.5px;height:1px;background:#8a8a8a"></div>
<div class="a" style="left:37.5px;top:244.5px;width:1px;height:1px;background:#aaa"></div>
<div class="rn rv" style="left:32.5px;top:246.3px">2</div>
<div class="a" style="left:37.5px;top:254.2px;width:1px;height:1px;background:#aaa"></div>
<div class="a" style="left:36.3px;top:259.1px;width:2.5px;height:1px;background:#8a8a8a"></div>
<div class="a" style="left:37.5px;top:263.9px;width:1px;height:1px;background:#aaa"></div>
<div class="rn rv" style="left:32.5px;top:265.8px">1</div>
<div class="a" style="left:37.5px;top:273.7px;width:1px;height:1px;background:#aaa"></div>
<div class="a" style="left:36.3px;top:278.6px;width:2.5px;height:1px;background:#8a8a8a"></div>
<div class="a" style="left:37.5px;top:283.4px;width:1px;height:1px;background:#aaa"></div>
<div class="rn rv" style="left:32.5px;top:285.3px">0</div>
<div class="a" style="left:37.5px;top:293.2px;width:1px;height:1px;background:#aaa"></div>
<div class="a" style="left:36.3px;top:298.0px;width:2.5px;height:1px;background:#8a8a8a"></div>
<div class="a" style="left:37.5px;top:302.9px;width:1px;height:1px;background:#aaa"></div>
<div class="rn rv" style="left:32.5px;top:304.8px">1</div>
<div class="a" style="left:37.5px;top:312.7px;width:1px;height:1px;background:#aaa"></div>
<div class="a" style="left:36.3px;top:317.5px;width:2.5px;height:1px;background:#8a8a8a"></div>
<div class="a" style="left:37.5px;top:322.4px;width:1px;height:1px;background:#aaa"></div>
<div class="rn rv" style="left:32.5px;top:324.3px">2</div>
<div class="a" style="left:37.5px;top:332.1px;width:1px;height:1px;background:#aaa"></div>
<div class="a" style="left:36.3px;top:337.0px;width:2.5px;height:1px;background:#8a8a8a"></div>
<div class="a" style="left:37.5px;top:341.9px;width:1px;height:1px;background:#aaa"></div>
<div class="rn rv" style="left:32.5px;top:343.7px">3</div>
<div class="a" style="left:37.5px;top:351.6px;width:1px;height:1px;background:#aaa"></div>
<div class="a" style="left:36.3px;top:356.5px;width:2.5px;height:1px;background:#8a8a8a"></div>
<div class="a" style="left:37.5px;top:361.4px;width:1px;height:1px;background:#aaa"></div>
<div class="rn rv" style="left:32.5px;top:363.2px">4</div>
<div class="a" style="left:37.5px;top:371.1px;width:1px;height:1px;background:#aaa"></div>
<div class="a" style="left:36.3px;top:376.0px;width:2.5px;height:1px;background:#8a8a8a"></div>
<div class="a" style="left:37.5px;top:380.8px;width:1px;height:1px;background:#aaa"></div>
<div class="rn rv" style="left:32.5px;top:382.7px">5</div>
<div class="a" style="left:37.5px;top:390.6px;width:1px;height:1px;background:#aaa"></div>
<div class="a" style="left:36.3px;top:395.4px;width:2.5px;height:1px;background:#8a8a8a"></div>
<div class="a" style="left:37.5px;top:400.3px;width:1px;height:1px;background:#aaa"></div>
<div class="rn rv" style="left:32.5px;top:402.2px">6</div>
<div class="a" style="left:37.5px;top:410.1px;width:1px;height:1px;background:#aaa"></div>
<div class="a" style="left:36.3px;top:414.9px;width:2.5px;height:1px;background:#8a8a8a"></div>
<div class="a" style="left:37.5px;top:419.8px;width:1px;height:1px;background:#aaa"></div>
<div class="rn rv" style="left:32.5px;top:421.7px">7</div>
<div class="a" style="left:37.5px;top:429.5px;width:1px;height:1px;background:#aaa"></div>
<div class="a" style="left:36.3px;top:434.4px;width:2.5px;height:1px;background:#8a8a8a"></div>
<div class="a" style="left:37.5px;top:439.3px;width:1px;height:1px;background:#aaa"></div>
<div class="rn rv" style="left:32.5px;top:441.1px">8</div>
<div class="a" style="left:37.5px;top:449.0px;width:1px;height:1px;background:#aaa"></div>
<div class="a" style="left:36.3px;top:453.9px;width:2.5px;height:1px;background:#8a8a8a"></div>
<div class="a" style="left:37.5px;top:458.8px;width:1px;height:1px;background:#aaa"></div>
<div class="rn rv" style="left:32.5px;top:460.6px">9</div>
<div class="a" style="left:37.5px;top:468.5px;width:1px;height:1px;background:#aaa"></div>
<div id="slide" class="a"></div>
<div class="a" style="left:148px;top:103px;width:494px;height:80.5px;background:#e35f10"></div>
<div class="a" style="left:148px;top:181.8px;width:494px;height:1.8px;background:linear-gradient(#e05a0e,#c65010)"></div>
<div class="a" style="left:153.5px;top:119px;width:83.5px;height:55px;border-radius:50%;background:#fff"></div>
<!-- books -->
<svg class="a" style="left:155px;top:120px" width="80" height="50" viewBox="155 120 80 50">
 <polygon points="169,141.5 227,146 220.5,161.5 163,149.5" fill="#cde3cf" stroke="#b8d4bb" stroke-width="0.4"/>
 <polygon points="173.5,139 176,136.5 180,136.5 178,139" fill="#a8ab9c"/>
 <polygon points="173.5,139 178.5,139 178.5,157 173.5,156" fill="#8c8f82"/>
 <polygon points="178.5,132 184.5,128.5 186,129 180.5,132.5" fill="#a9ad9e"/>
 <polygon points="178.5,132 183.5,132 183.5,158.5 178.5,157.5" fill="#7c8073"/>
 <rect x="179.8" y="141" width="2.6" height="1.6" fill="#b9d27a"/>
 <polygon points="183.5,134 190.5,128 193,128.5 186,134.5" fill="#cf2f2a"/>
 <polygon points="183.5,134.5 190,134.5 190.8,160.5 184.2,160" fill="#e6654b"/>
 <rect x="185.5" y="141" width="3" height="10" fill="#ef8a70" opacity="0.7"/>
 <polygon points="190,135.5 199,131 204.5,130.5 196,136" fill="#7cc6c4"/>
 <polygon points="190.5,136 196.5,136 197.2,159.7 191,160" fill="#3a9896"/>
 <polygon points="197,137 200.5,134.5 214.5,130.5 211,133.5" fill="#f1d67a"/>
 <polygon points="197,137 202.5,136.5 202.8,158.8 197.5,159" fill="#c9951c"/>
 <polygon points="202.5,136.5 214.5,131 214.8,152.5 203,158.8" fill="#f5c41a"/>
 <polygon points="205.5,142.5 211.5,140 211.5,143.5 205.5,146" fill="#fde68a" stroke="#c79a1e" stroke-width="0.4"/>
</svg>
<div class="t title" style="left:289.6px;top:117px;transform:scaleX(1.032)">ЛИГВОДИДАКТИЧЕСКИЙ ПРОГНОЗ</div>
<div class="t title" style="left:248px;top:142.2px;transform:scaleX(1.003)">ИЗУЧЕНИЯ РУССКОГО ЯЗЫКА: ВОСПИТАНИЕ</div>
<div class="t title" style="left:391.3px;top:166.2px;transform:scaleX(1.065)">СЛОВОМ</div>

<!-- guides -->
<div class="a" style="left:394.8px;top:97.5px;width:0;height:384px;border-left:1px dotted #b0b0b0"></div>
<div class="a" style="left:45px;top:288.5px;width:620px;height:0;border-top:1px dotted #b8b8b8"></div>

<div class="t body" style="left:191.6px;top:205.85px">в чем смысл жизни?</div>
<div class="t body" style="left:191.6px;top:232.15px">как</div>
<div class="t body" style="left:237.1px;top:232.15px">достичь</div>
<div class="t body" style="left:349.1px;top:232.15px">гармонии</div>
<div class="t body" style="left:459.7px;top:232.15px">ума,</div>
<div class="t body" style="left:518.3px;top:232.15px">чувства</div>
<div class="t body" style="left:191.6px;top:259.15px">сердца?</div>
<div class="t body" style="left:191.7px;top:284.35px">как</div>
<div class="t body" style="left:242.2px;top:284.35px">помочь</div>
<div class="t body" style="left:325.9px;top:284.35px">воспитанию</div>
<div class="t body" style="left:456.1px;top:284.35px">ответственности</div>
<div class="t body" style="left:191.7px;top:310.65px">у детей и молодежи?</div>
<div class="t body" style="left:191.7px;top:337.65px">как</div>
<div class="t body" style="left:239.4px;top:337.65px">научиться</div>
<div class="t body" style="left:357.9px;top:337.65px">словолюбию</div>
<div class="t body" style="left:504.6px;top:337.65px">в</div>
<div class="t body" style="left:532.3px;top:337.65px">условиях</div>
<div class="t body" style="left:191.7px;top:363.65px">общения и коммуникации</div>
<svg class="a" style="left:359px;top:355.5px" width="131" height="3"><path d="M0,1.5 Q0.75,0.7 1.50,1.5 Q2.25,2.3 3.00,1.5 Q3.75,0.7 4.50,1.5 Q5.25,2.3 6.00,1.5 Q6.75,0.7 7.50,1.5 Q8.25,2.3 9.00,1.5 Q9.75,0.7 10.50,1.5 Q11.25,2.3 12.00,1.5 Q12.75,0.7 13.50,1.5 Q14.25,2.3 15.00,1.5 Q15.75,0.7 16.50,1.5 Q17.25,2.3 18.00,1.5 Q18.75,0.7 19.50,1.5 Q20.25,2.3 21.00,1.5 Q21.75,0.7 22.50,1.5 Q23.25,2.3 24.00,1.5 Q24.75,0.7 25.50,1.5 Q26.25,2.3 27.00,1.5 Q27.75,0.7 28.50,1.5 Q29.25,2.3 30.00,1.5 Q30.75,0.7 31.50,1.5 Q32.25,2.3 33.00,1.5 Q33.75,0.7 34.50,1.5 Q35.25,2.3 36.00,1.5 Q36.75,0.7 37.50,1.5 Q38.25,2.3 39.00,1.5 Q39.75,0.7 40.50,1.5 Q41.25,2.3 42.00,1.5 Q42.75,0.7 43.50,1.5 Q44.25,2.3 45.00,1.5 Q45.75,0.7 46.50,1.5 Q47.25,2.3 48.00,1.5 Q48.75,0.7 49.50,1.5 Q50.25,2.3 51.00,1.5 Q51.75,0.7 52.50,1.5 Q53.25,2.3 54.00,1.5 Q54.75,0.7 55.50,1.5 Q56.25,2.3 57.00,1.5 Q57.75,0.7 58.50,1.5 Q59.25,2.3 60.00,1.5 Q60.75,0.7 61.50,1.5 Q62.25,2.3 63.00,1.5 Q63.75,0.7 64.50,1.5 Q65.25,2.3 66.00,1.5 Q66.75,0.7 67.50,1.5 Q68.25,2.3 69.00,1.5 Q69.75,0.7 70.50,1.5 Q71.25,2.3 72.00,1.5 Q72.75,0.7 73.50,1.5 Q74.25,2.3 75.00,1.5 Q75.75,0.7 76.50,1.5 Q77.25,2.3 78.00,1.5 Q78.75,0.7 79.50,1.5 Q80.25,2.3 81.00,1.5 Q81.75,0.7 82.50,1.5 Q83.25,2.3 84.00,1.5 Q84.75,0.7 85.50,1.5 Q86.25,2.3 87.00,1.5 Q87.75,0.7 88.50,1.5 Q89.25,2.3 90.00,1.5 Q90.75,0.7 91.50,1.5 Q92.25,2.3 93.00,1.5 Q93.75,0.7 94.50,1.5 Q95.25,2.3 96.00,1.5 Q96.75,0.7 97.50,1.5 Q98.25,2.3 99.00,1.5 Q99.75,0.7 100.50,1.5 Q101.25,2.3 102.00,1.5 Q102.75,0.7 103.50,1.5 Q104.25,2.3 105.00,1.5 Q105.75,0.7 106.50,1.5 Q107.25,2.3 108.00,1.5 Q108.75,0.7 109.50,1.5 Q110.25,2.3 111.00,1.5 Q111.75,0.7 112.50,1.5 Q113.25,2.3 114.00,1.5 Q114.75,0.7 115.50,1.5 Q116.25,2.3 117.00,1.5 Q117.75,0.7 118.50,1.5 Q119.25,2.3 120.00,1.5 Q120.75,0.7 121.50,1.5 Q122.25,2.3 123.00,1.5 Q123.75,0.7 124.50,1.5 Q125.25,2.3 126.00,1.5 Q126.75,0.7 127.50,1.5 Q128.25,2.3 129.00,1.5" fill="none" stroke="#e58c8c" stroke-width="0.8"/></svg>
<!-- bullets -->
<div class="bul" style="left:163px;top:211px"></div>
<div class="bul" style="left:163px;top:241.8px"></div>
<div class="bul" style="left:167px;top:288.5px"></div>
<div class="bul" style="left:163.3px;top:342.4px"></div>





<!-- status bar content -->
<svg class="a" style="left:476.5px;top:484.5px" width="7" height="7" viewBox="0 0 7 7"><path d="M3.5,0.5 L6.5,4 H0.5Z" fill="#b8b8b8"/><rect x="0.5" y="4.5" width="6" height="2" fill="#c8c8c8"/></svg>
<div class="t" style="left:485.5px;top:485.5px;font-size:5.9px;color:#555">Заметки</div>
<svg class="a" style="left:517.5px;top:484.5px" width="7" height="7" viewBox="0 0 7 7"><path d="M0.3,0.3 H6.7 V4.7 H3.5 L2,6.5 V4.7 H0.3Z" fill="#666"/></svg>
<div class="t" style="left:526.5px;top:485.5px;font-size:5.9px;color:#555">Примечания</div>
<div class="a" style="left:570.7px;top:482px;width:18px;height:11.5px;background:#d2d2d2"></div>
<svg class="a" style="left:576px;top:484.5px" width="8" height="7" viewBox="0 0 8 7" fill="none" stroke="#888" stroke-width="0.7"><rect x="0.5" y="0.5" width="7" height="6"/><rect x="2" y="2" width="4" height="2.5" fill="#aaa" stroke="none"/></svg>
<svg class="a" style="left:594.3px;top:484.3px" width="8" height="7.5" viewBox="0 0 8 7.5" fill="none" stroke="#999" stroke-width="0.6"><rect x="0.5" y="0.5" width="3" height="2.5"/><rect x="4.5" y="0.5" width="3" height="2.5"/><rect x="0.5" y="4.5" width="3" height="2.5"/><rect x="4.5" y="4.5" width="3" height="2.5"/></svg>
<svg class="a" style="left:613px;top:484.3px" width="8" height="7.5" viewBox="0 0 8 7.5" fill="none" stroke="#999" stroke-width="0.6"><path d="M0.5,1 Q2.5,0 4,1 Q5.5,0 7.5,1 V6.5 Q5.5,5.5 4,6.5 Q2.5,5.5 0.5,6.5Z" fill="#ccc"/><path d="M4,1V6.5"/></svg>
<svg class="a" style="left:632px;top:484.3px" width="7" height="8" viewBox="0 0 7 8" fill="none" stroke="#888" stroke-width="0.7"><path d="M0.3,0.8H6.7"/><rect x="1" y="1.3" width="5" height="3" fill="#bbb"/><path d="M3.5,4.5V7M2,7.5L3.5,6L5,7.5"/></svg>
<div class="a" style="left:647.7px;top:487.5px;width:4.5px;height:1px;background:#666"></div>
<div class="a" style="left:654px;top:488px;width:11px;height:0.8px;background:#aaa"></div>
<!-- video overlay -->
<div class="a" style="left:609.5px;top:88.3px;width:56px;height:332px;background:#1f1f1f;border-radius:2px 0 0 3px;box-shadow:0 2px 4px rgba(0,0,0,.25)"></div>
<div class="a" style="left:612px;top:90px;width:53px;height:82px;overflow:hidden;background:#bdbdbd">
<svg width="53" height="82" viewBox="612 90 53 82" style="position:absolute;left:0;top:0">
 <defs>
  <linearGradient id="wall" x1="0" y1="0" x2="1" y2="0"><stop offset="0" stop-color="#b2b2b2"/><stop offset="1" stop-color="#9e9e9e"/></linearGradient>
  <radialGradient id="glow" cx="0.5" cy="0.5" r="0.5"><stop offset="0" stop-color="#b8d4ff"/><stop offset="0.5" stop-color="#4a78ff"/><stop offset="1" stop-color="#3050d0" stop-opacity="0.6"/></radialGradient>
 </defs>
 <rect x="612" y="90" width="53" height="14" fill="url(#wall)"/>
 <rect x="612" y="103" width="38" height="35" fill="#1b1b1b"/>
 <rect x="612" y="138" width="53" height="34" fill="#bfbfbf"/>
 <rect x="619" y="131" width="6" height="1.5" fill="#6a6a6a"/>
 <rect x="612" y="148" width="10" height="13" fill="#3b3b3b"/>
 <path d="M665,100 Q652,101 642,107 Q633,114 631.5,128 Q631,146 636,160 L650,166 L665,166Z" fill="#a29c91"/>
 <path d="M636,118 Q633,132 636,150" stroke="#c2bcb0" stroke-width="1.6" fill="none" opacity="0.45"/>
 <path d="M665,116 Q654,116 649,122 Q644,131 644,142 Q645,154 651,162 L665,166Z" fill="#886a5c"/>
 <path d="M650,124 Q658,119 665,121 L665,128 Q656,126 649,130Z" fill="#a68575" opacity="0.8"/>
 <path d="M654,152 Q660,157 665,156 L665,166 L652,164Z" fill="#5e463c" opacity="0.8"/>
 <ellipse cx="657" cy="135.5" rx="11" ry="4.6" fill="url(#glow)"/>
 <ellipse cx="657" cy="135.3" rx="7" ry="1.8" fill="#d0e2ff" opacity="0.85"/>
</svg>
</div>
<div class="a" style="left:612px;top:158.5px;width:53px;height:13px;background:rgba(30,30,30,.85)"></div>
<div class="t" style="left:626px;top:161.5px;font-size:7.8px;color:#fff">Светлана Т</div>
<svg class="a" style="left:613px;top:160.5px" width="10" height="10" viewBox="0 0 10 10"><path d="M3.5,1.2 Q5,0.2 6.2,1.4 L6.8,5 Q6.5,6.8 4.8,7 L4.5,9.5 M2.5,6 Q3,8 5,8" stroke="#e03b3b" stroke-width="1.4" fill="#e03b3b"/><path d="M1,9.5 L9,0.8" stroke="#e03b3b" stroke-width="1.2"/></svg>

<div class="a" style="left:610.5px;top:171.5px;width:55px;height:83px;background:#82b440"></div>
<div class="a" style="left:612.5px;top:173.5px;width:53px;height:79px;overflow:hidden;background:linear-gradient(100deg,#cbcbcd 0%,#c1c1c2 50%,#b5b5b5 100%)">
  <div class="a" style="left:35px;top:64px;width:36px;height:30px;border-radius:70% 0 0 0;background:#2a2a2c"></div>
</div>
<div class="a" style="left:612.5px;top:241.5px;width:33px;height:11px;background:rgba(45,45,45,.85)"></div>
<div class="t" style="left:614.5px;top:243px;font-size:8.5px;color:#fff">Попова</div>

<div class="a" style="left:612px;top:254px;width:53px;height:82px;overflow:hidden;background:linear-gradient(#bbbeac,#b7baa8)">
  <div class="a" style="left:5px;top:10px;width:20px;height:25px;border-radius:50%;border:1.5px solid rgba(200,202,188,.35)"></div>
  <div class="a" style="left:28px;top:5px;width:20px;height:25px;border-radius:50%;border:1.5px solid rgba(200,202,188,.35)"></div>
  <div class="a" style="left:15px;top:40px;width:20px;height:25px;border-radius:50%;border:1.5px solid rgba(200,202,188,.35)"></div>
  <div class="a" style="left:24px;top:59px;width:45px;height:40px;border-radius:60% 20% 0 0;background:linear-gradient(90deg,#a6b0c0,#b4bccb)"></div>
</div>
<div class="a" style="left:612px;top:325.5px;width:53px;height:11px;background:rgba(40,40,40,.8)"></div>
<div class="t" style="left:614px;top:327.5px;font-size:8.5px;color:#fff">Уржаев Дани</div>
<svg class="a" style="left:613px;top:407px" width="10" height="10" viewBox="0 0 10 10"><path d="M3.5,1.2 Q5,0.2 6.2,1.4 L6.8,5 Q6.5,6.8 4.8,7 L4.5,9.5 M2.5,6 Q3,8 5,8" stroke="#e03b3b" stroke-width="1.4" fill="#e03b3b"/><path d="M1,9.5 L9,0.8" stroke="#e03b3b" stroke-width="1.2"/></svg>
</body></html>
